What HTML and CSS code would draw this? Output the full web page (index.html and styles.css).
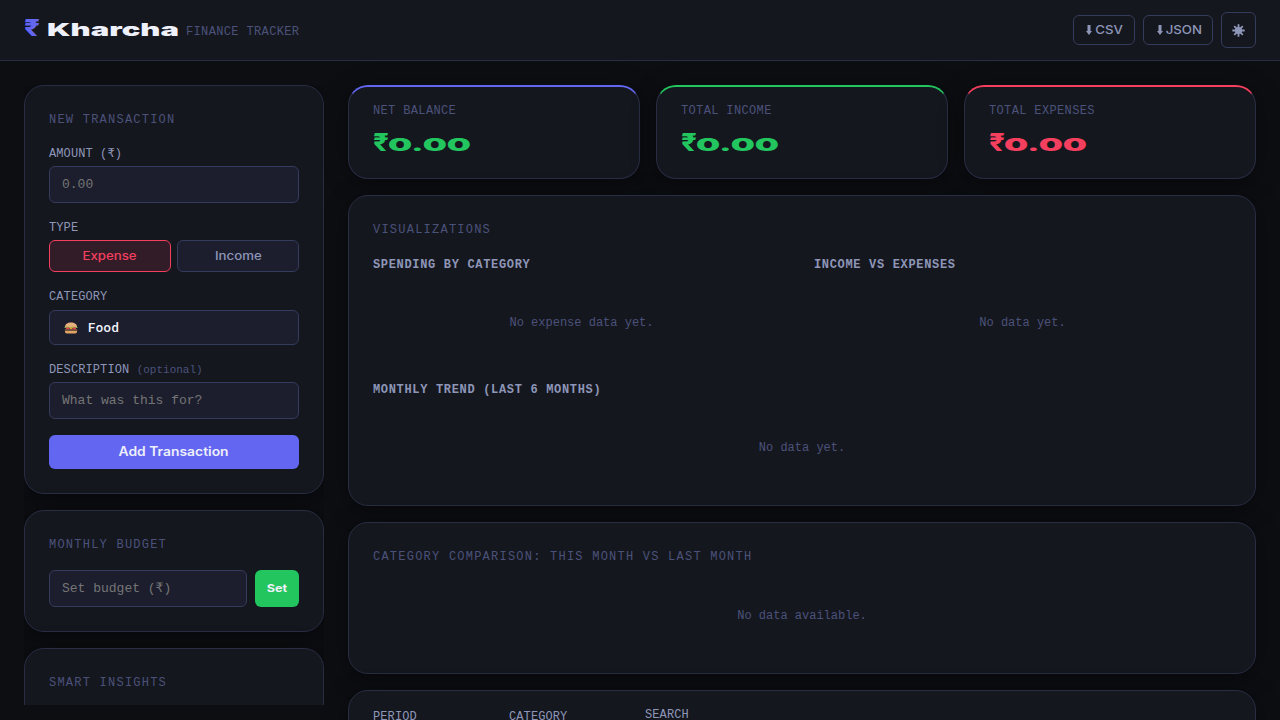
FILE: index.html
```
<!DOCTYPE html>
<html lang="en">
<head>
    <meta charset="utf-8">
    <title>Kharcha - Finance Tracker</title>
    <meta name="viewport" content="width=device-width, initial-scale=1">
    <link rel="stylesheet" href="styles.css">
</head>
<body>
    <header class="header">
        <div class="brand">
            <svg class="logo" width="156" height="30" viewBox="0 0 156 30">
                <text class="logo-rupee" x="0" y="21" textLength="16" lengthAdjust="spacingAndGlyphs">₹</text>
                <text class="logo-name" x="23" y="21" textLength="132" lengthAdjust="spacingAndGlyphs">Kharcha</text>
            </svg>
            <span class="tagline">FINANCE TRACKER</span>
        </div>
        <div class="header-actions">
            <button class="btn-outline btn-csv">
                <svg width="6" height="10" viewBox="0 0 6 10"><path d="M1.500 0h3v6H6L3 10 0 6h1.500z"/></svg>
                <span class="wide">CSV</span>
            </button>
            <button class="btn-outline btn-json">
                <svg width="6" height="10" viewBox="0 0 6 10"><path d="M1.500 0h3v6H6L3 10 0 6h1.500z"/></svg>
                <span class="wide">JSON</span>
            </button>
            <button class="btn-outline btn-theme" aria-label="Toggle theme">
                <svg width="13" height="13" viewBox="0 0 13 13">
                    <path class="rays" d="M6.500 .3v12.400M.3 6.500h12.400M2.200 2.200l8.600 8.600M10.800 2.200l-8.600 8.600"/>
                    <circle cx="6.500" cy="6.500" r="3.600"/>
                </svg>
            </button>
        </div>
    </header>

    <main class="layout">
        <aside class="sidebar">
            <section class="card">
                <h2 class="card-title">NEW TRANSACTION</h2>
                <div class="field">
                    <label class="label" for="amount">AMOUNT (₹)</label>
                    <input class="input" id="amount" type="text" placeholder="0.00">
                </div>
                <div class="field">
                    <div class="label">TYPE</div>
                    <div class="type-toggle">
                        <button class="type-btn active"><span class="wide">Expense</span></button>
                        <button class="type-btn"><span class="wide">Income</span></button>
                    </div>
                </div>
                <div class="field">
                    <div class="label label-category">CATEGORY</div>
                    <div class="select">
                        <svg width="14" height="12" viewBox="0 0 14 12">
                            <path fill="#e6b17c" d="M1 5C1 2 3.500 .5 7 .5S13 2 13 5z"/>
                            <path fill="#7cae4d" d="M.5 4.800h13v1.200H.5z"/>
                            <path fill="#e8404f" d="M2 5.500h3.500v1.500H2zM8.500 5.500H12v1.500H8.500z"/>
                            <path fill="#f6b73c" d="M5 5.500h4L7 7.500z"/>
                            <path fill="#75503a" d="M.8 7h12.400v2H.8z"/>
                            <path fill="#e0a366" d="M1 9h12v.8c0 1-.8 1.700-1.800 1.700H2.800C1.800 11.500 1 10.800 1 9.800z"/>
                        </svg>
                        <span>Food</span>
                    </div>
                </div>
                <div class="field">
                    <label class="label" for="desc">DESCRIPTION <span class="optional">(optional)</span></label>
                    <input class="input" id="desc" type="text" placeholder="What was this for?">
                </div>
                <button class="btn-add"><span class="wide">Add Transaction</span></button>
            </section>

            <section class="card">
                <h2 class="card-title">MONTHLY BUDGET</h2>
                <div class="budget-row">
                    <input class="input" type="text" placeholder="Set budget (₹)">
                    <button class="btn-set"><span class="wide">Set</span></button>
                </div>
            </section>

            <section class="card insights">
                <h2 class="card-title">SMART INSIGHTS</h2>
            </section>
        </aside>

        <div class="content">
            <div class="stats">
                <div class="card stat stat-balance">
                    <div class="stat-label">NET BALANCE</div>
                    <svg class="stat-value positive" width="100" height="28" viewBox="0 0 100 28">
                        <text class="stat-rupee" x="0" y="22" textLength="16" lengthAdjust="spacingAndGlyphs">₹</text>
                        <text class="stat-digits" x="15" y="22" textLength="83" lengthAdjust="spacingAndGlyphs">0.00</text>
                    </svg>
                </div>
                <div class="card stat stat-income">
                    <div class="stat-label">TOTAL INCOME</div>
                    <svg class="stat-value positive" width="100" height="28" viewBox="0 0 100 28">
                        <text class="stat-rupee" x="0" y="22" textLength="16" lengthAdjust="spacingAndGlyphs">₹</text>
                        <text class="stat-digits" x="15" y="22" textLength="83" lengthAdjust="spacingAndGlyphs">0.00</text>
                    </svg>
                </div>
                <div class="card stat stat-expense">
                    <div class="stat-label">TOTAL EXPENSES</div>
                    <svg class="stat-value negative" width="100" height="28" viewBox="0 0 100 28">
                        <text class="stat-rupee" x="0" y="22" textLength="16" lengthAdjust="spacingAndGlyphs">₹</text>
                        <text class="stat-digits" x="15" y="22" textLength="83" lengthAdjust="spacingAndGlyphs">0.00</text>
                    </svg>
                </div>
            </div>

            <section class="card">
                <h2 class="card-title">VISUALIZATIONS</h2>
                <div class="charts">
                    <div>
                        <h3 class="chart-title">SPENDING BY CATEGORY</h3>
                        <p class="empty">No expense data yet.</p>
                    </div>
                    <div>
                        <h3 class="chart-title">INCOME VS EXPENSES</h3>
                        <p class="empty">No data yet.</p>
                    </div>
                    <div class="chart-full">
                        <h3 class="chart-title">MONTHLY TREND (LAST 6 MONTHS)</h3>
                        <p class="empty">No data yet.</p>
                    </div>
                </div>
            </section>

            <section class="card">
                <h2 class="card-title">CATEGORY COMPARISON: THIS MONTH VS LAST MONTH</h2>
                <p class="empty">No data available.</p>
            </section>

            <section class="card filters">
                <div class="label filter">PERIOD</div>
                <div class="label filter">CATEGORY</div>
                <div class="label filter filter-search">SEARCH</div>
            </section>
        </div>
    </main>
</body>
</html>
```
FILE: styles.css
```
:root {
    --bg: #0d0e12;
    --surface: #15171f;
    --surface2: #1c1e2e;
    --border: #282d43;
    --border2: #353b5c;
    --text: #eef0fa;
    --text2: #8e96b8;
    --text3: #4b527a;
    --accent: #6366f1;
    --green: #22c55e;
    --red: #f43f5e;
    --mono: "Liberation Mono", monospace;
    --sans: Inter, "Liberation Sans", sans-serif;
}

* {
    box-sizing: border-box;
    margin: 0;
    padding: 0;
}

body {
    height: 100vh;
    overflow: hidden;
    background: var(--bg);
    color: var(--text);
    font-family: var(--mono);
}

button {
    cursor: pointer;
    font-family: var(--sans);
}

/* Header */
.header {
    display: flex;
    justify-content: space-between;
    align-items: center;
    height: 61px;
    padding: 0 24px;
    background: var(--surface);
    border-bottom: 1px solid var(--border);
}

.brand,
.header-actions {
    display: flex;
    align-items: center;
}

.header-actions {
    gap: 8px;
}

.logo {
    overflow: visible;
    font-family: var(--sans);
}

.logo-rupee {
    fill: var(--accent);
    font-size: 23px;
    font-weight: 800;
}

.logo-name {
    fill: var(--text);
    font-size: 18px;
    font-weight: 900;
}

.tagline {
    margin: 4px 0 0 6px;
    color: var(--text3);
    font-size: 12px;
    letter-spacing: .36px;
}

.btn-outline {
    display: flex;
    align-items: center;
    justify-content: center;
    gap: 5px;
    height: 30px;
    background: transparent;
    border: 1px solid var(--border2);
    border-radius: 6px;
    color: var(--text2);
    font-size: 11.5px;
    font-weight: 500;
}

.btn-outline svg {
    fill: currentColor;
}

.btn-csv {
    width: 62px;
}

.btn-json {
    width: 70px;
}

.btn-theme {
    width: 35px;
    height: 36px;
}

.rays {
    stroke: currentColor;
    stroke-width: 1.8;
}

/* Layout */
.layout {
    display: grid;
    grid-template-columns: 300px 1fr;
    gap: 24px;
    height: calc(100vh - 61px);
    padding: 24px 24px 0;
    align-items: start;
}

.sidebar {
    display: flex;
    flex-direction: column;
    gap: 16px;
    height: calc(100vh - 100px);
    overflow: hidden;
}

.content {
    display: flex;
    flex-direction: column;
    gap: 16px;
}

.card {
    flex-shrink: 0;
    padding: 24px;
    background: var(--surface);
    border: 1px solid var(--border);
    border-radius: 20px;
    box-shadow: 0 4px 24px rgba(0, 0, 0, .4);
}

.card-title {
    margin-bottom: 15px;
    color: var(--text3);
    font-size: 12px;
    font-weight: 400;
    line-height: 20px;
    letter-spacing: 1.23px;
}

.insights {
    height: 160px;
}

/* Form */
.field {
    margin-bottom: 15px;
}

.card-title + .field {
    margin-top: -1px;
}

.label {
    display: block;
    margin-bottom: 2px;
    color: var(--text2);
    font-size: 12px;
    line-height: 20px;
    letter-spacing: .1px;
}

.label-category {
    margin-bottom: 3px;
}

.optional {
    color: var(--text3);
    font-size: 11px;
    letter-spacing: 0;
}

.input,
.select {
    width: 100%;
    height: 37px;
    padding: 0 12px;
    background: var(--surface2);
    border: 1px solid var(--border2);
    border-radius: 6px;
    color: var(--text);
    font-family: var(--mono);
    font-size: 13px;
}

.input::placeholder {
    color: #757575;
}

.select {
    display: flex;
    align-items: center;
    gap: 10px;
    height: 35px;
    padding: 0 14px;
    font-family: Roboto, sans-serif;
    font-size: 13px;
    font-weight: 500;
    letter-spacing: .6px;
}

.type-toggle {
    display: grid;
    grid-template-columns: 1fr 1fr;
    gap: 6px;
}

.type-btn {
    height: 32px;
    padding-bottom: 1px;
    background: var(--surface2);
    border: 1px solid var(--border2);
    border-radius: 6px;
    color: var(--text2);
    font-size: 11.5px;
    font-weight: 500;
}

.type-btn.active {
    background: #321c28;
    border-color: var(--red);
    color: var(--red);
}

.wide {
    display: inline-block;
    transform: scaleX(1.15);
}

.btn-add,
.btn-set {
    padding-bottom: 1px;
    border: none;
    border-radius: 6px;
    color: var(--text);
    font-weight: 700;
}

.btn-add {
    display: block;
    width: 100%;
    height: 34px;
    margin-top: 16px;
    background: var(--accent);
    font-size: 12.500px;
    font-weight: 600;
}

.btn-add .wide {
    transform: scaleX(1.11);
}

.budget-row {
    display: flex;
    gap: 8px;
}

.btn-set {
    flex: 0 0 44px;
    background: var(--green);
    font-size: 11px;
}

/* Stats */
.stats {
    display: grid;
    grid-template-columns: repeat(3, 1fr);
    gap: 16px;
}

.stat {
    height: 94px;
    padding: 14px 24px 0;
    border-top-width: 2px;
}

.stat-balance {
    border-top-color: var(--accent);
}

.stat-income {
    border-top-color: var(--green);
}

.stat-expense {
    border-top-color: var(--red);
}

.stat-label {
    color: var(--text3);
    font-size: 12px;
    line-height: 20px;
    letter-spacing: .36px;
}

.stat-value {
    display: block;
    margin-top: 8px;
    overflow: visible;
    font-family: var(--sans);
    font-weight: 900;
}

.stat-rupee {
    font-size: 24px;
    font-weight: 800;
}

.stat-digits {
    font-size: 18px;
}

.positive {
    fill: var(--green);
}

.negative {
    fill: var(--red);
}

/* Charts */
.charts {
    display: grid;
    grid-template-columns: 1fr 1fr;
    gap: 24px;
}

.chart-full {
    grid-column: 1 / -1;
}

.chart-title {
    margin-bottom: 14px;
    color: var(--text2);
    font-size: 12px;
    font-weight: 700;
    line-height: 20px;
    letter-spacing: .67px;
}

.empty {
    padding: 24px 0 23px;
    color: var(--text3);
    font-size: 12px;
    line-height: 20px;
    text-align: center;
}

/* Filters */
.filters {
    display: flex;
    align-items: flex-start;
    gap: 16px;
    height: 120px;
    padding-top: 16px;
}

.filter {
    width: 120px;
}

.filter-search {
    margin-top: -2px;
}
```
